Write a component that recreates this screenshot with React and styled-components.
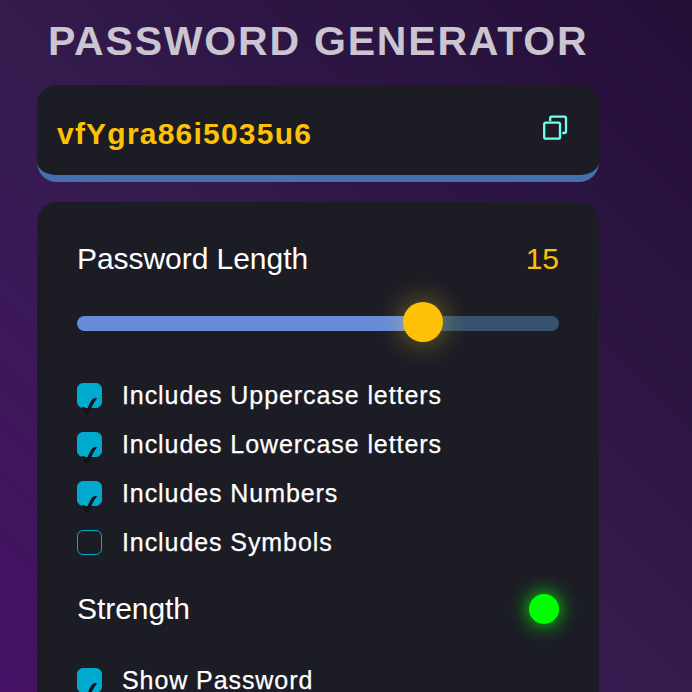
import React from "react";
import styled, { createGlobalStyle } from "styled-components";

const Global = createGlobalStyle`
  * { box-sizing: border-box; }
  body {
    margin: 0;
    font-family: "Liberation Sans", Arial, sans-serif;
    color: #fff;
  }
`;
const Screen = styled.div`
  height: 692px;
  overflow: hidden;
  background: linear-gradient(45deg, #461165 0%, #3a1956 33%, #341c4e 47%, #2d1645 66%, #240f37 100%);
`;
const Page = styled.main`
  width: 562px;
  height: 692px;
  margin-left: 37px;
  padding-top: 16px;
  display: flex;
  flex-direction: column;
`;
const Title = styled.h1`
  margin: 0;
  height: 49px;
  line-height: 50px;
  padding-left: 11px;
  font-size: 41px;
  letter-spacing: 1.8px;
  white-space: nowrap;
  color: #cbc4d1;
`;
const PasswordBox = styled.section`
  margin-top: 20px;
  height: 97px;
  flex-shrink: 0;
  border-radius: 20px;
  border-bottom: 7px solid #4470ad;
  background: #1c1c25;
  display: flex;
  justify-content: space-between;
  padding: 29px 31px 0 20px;
`;
const Password = styled.output`
  font-size: 30px;
  font-weight: 700;
  line-height: 40px;
  letter-spacing: 1.22px;
  color: #ffc107;
`;
const CopyIcon = styled.svg`
  width: 26px;
  height: 26px;
  fill: none;
  stroke: #6ffff0;
  stroke-width: 2.3;
`;
const Panel = styled.section`
  margin-top: 20px;
  flex: 1;
  border-radius: 20px 20px 0 0;
  background: #1c1c25;
  padding: 36px 40px 0;
`;
const Row = styled.div`
  display: flex;
  justify-content: space-between;
  align-items: center;
  height: 40px;
  font-size: 30px;
  margin-top: ${(p) => p.$top || 0}px;
`;
const Label = styled.span`
  padding-top: ${(p) => p.$drop || 0}px;
  letter-spacing: -0.05px;
`;
const Count = styled.span`
  padding-top: 1px;
  color: #ffc107;
`;
const Track = styled.div`
  height: 15px;
  margin-top: 38px;
  border-radius: 8px;
  background: linear-gradient(90deg, #668cd9 346px, #36526f 346px);
  display: flex;
  align-items: center;
`;
const Thumb = styled.div`
  width: 40px;
  height: 40px;
  margin: -3px 0 0 326px;
  border-radius: 50%;
  background: #ffc107;
  box-shadow: 0 0 28px rgba(255, 220, 40, 0.45);
`;
const Options = styled.div`
  display: flex;
  flex-direction: column;
  gap: 19px;
  margin-top: ${(p) => p.$top}px;
`;
const Option = styled.label`
  display: flex;
  align-items: center;
  gap: 20px;
  height: 30px;
  font-size: 25px;
  letter-spacing: 0.92px;
  white-space: nowrap;
`;
const OptionText = styled.span`
  -webkit-text-stroke: 0.25px #fff;
`;
const Box = styled.span`
  width: 25px;
  height: 25px;
  border-radius: 6px;
  border: 1px solid #00a9ce;
  background: ${(p) => (p.$on ? "#00a9ce" : "transparent")};
`;
const Tick = styled.svg`
  display: block;
  width: 24px;
  height: 34px;
  margin: -1px;
  fill: #11151a;
`;
const Light = styled.span`
  width: 30px;
  height: 30px;
  border-radius: 50%;
  background: #00ff00;
  box-shadow: 0 0 20px #00ff00;
`;

function Check({ label, on }) {
  return (
    <Option>
      <Box $on={on}>
        {on && (
          <Tick viewBox="0 0 24 34">
            <path d="M4 25.2 Q5.8 23.6 7.6 24.2 Q9 25 9.8 27.4 Q12.3 20 15.4 16.2 Q17.4 14.6 20.2 15 Q15.6 20.8 12 30.6 Q10.8 32 8.8 31.7 Q7.6 27.9 4 25.2Z" />
          </Tick>
        )}
      </Box>
      <OptionText>{label}</OptionText>
    </Option>
  );
}

export default function App() {
  return (
    <>
      <Global />
      <Screen>
        <Page>
          <Title>PASSWORD GENERATOR</Title>
          <PasswordBox>
            <Password>vfYgra86i5035u6</Password>
            <CopyIcon viewBox="0 0 26 26">
              <rect x="2.2" y="8.6" width="15.8" height="16" rx="1.4" />
              <path d="M8.2 7V4Q8.2 2.6 9.4 2.6H22.6Q24 2.6 24 4V17.6Q24 19 22.6 19H20.2" />
            </CopyIcon>
          </PasswordBox>
          <Panel>
            <Row>
              <Label $drop={1}>Password Length</Label>
              <Count>15</Count>
            </Row>
            <Track>
              <Thumb />
            </Track>
            <Options $top={49}>
              <Check label="Includes Uppercase letters" on />
              <Check label="Includes Lowercase letters" on />
              <Check label="Includes Numbers" on />
              <Check label="Includes Symbols" />
            </Options>
            <Row $top={32}>
              <Label>Strength</Label>
              <Light />
            </Row>
            <Options $top={36}>
              <Check label="Show Password" on />
            </Options>
          </Panel>
        </Page>
      </Screen>
    </>
  );
}
